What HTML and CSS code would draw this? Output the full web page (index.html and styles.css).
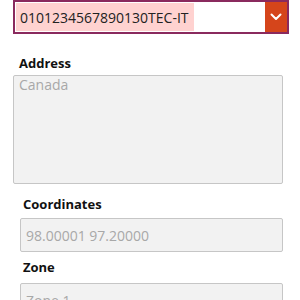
FILE: index.html
```html
<!DOCTYPE html>
<html>
<head>
<meta charset="utf-8">
<link rel="stylesheet" href="styles.css">
</head>
<body>
<div class="page">
  <div class="select">
    <span class="value">0101234567890130TEC-IT</span>
    <span class="spacer"></span>
    <span class="btn">
      <svg width="12" height="8" viewBox="0 0 12 8"><path d="M1.5 1.5 L6 6 L10.5 1.5" fill="none" stroke="#fff" stroke-width="2" stroke-linecap="round" stroke-linejoin="round"/></svg>
    </span>
  </div>
  <div class="group g-address">
    <div class="label">Address</div>
    <div class="textarea">Canada</div>
  </div>
  <div class="group g-coords">
    <div class="label">Coordinates</div>
    <div class="input">98.00001 97.20000</div>
  </div>
  <div class="group g-zone">
    <div class="label">Zone</div>
    <div class="input">Zone 1</div>
  </div>
</div>
</body>
</html>
```
FILE: styles.css
```css
html, body {
  margin: 0;
  padding: 0;
  background: #fff;
  overflow: hidden;
}
body {
  font-family: "Open Sans", "Noto Sans", sans-serif;
  font-size: 14px;
  color: #111;
}
.page {
  display: flex;
  flex-direction: column;
  width: 300px;
}
.page > * {
  flex-shrink: 0;
}
.select {
  margin-left: 13px;
  width: 276px;
  height: 34px;
  box-sizing: border-box;
  border: 2px solid #8a2a5e;
  display: flex;
  align-items: stretch;
  background: #fff;
}
.value {
  margin: 1px 0 1px 1px;
  background: #ffd2d0;
  padding: 0 5px 0 4px;
  display: flex;
  align-items: center;
  color: #222;
  font-size: 14px;
}
.spacer {
  flex: 1;
}
.btn {
  width: 22px;
  background: #d5451b;
  display: flex;
  align-items: center;
  justify-content: center;
}
.group {
  display: flex;
  flex-direction: column;
}
.group > * {
  flex-shrink: 0;
}
.label {
  font-weight: 700;
  font-size: 13px;
  line-height: 18px;
  color: #111;
}
.g-address {
  margin-top: 20px;
  padding-left: 13px;
  width: 270px;
}
.g-address .label {
  padding-left: 6px;
  margin-bottom: 3px;
}
.textarea {
  height: 109px;
  box-sizing: border-box;
  border: 1px solid #c6c6c6;
  border-radius: 2px;
  background: #f2f2f2;
  color: #a8a8a8;
  padding: 0 5px;
  line-height: 18px;
}
.g-coords {
  margin-top: 11px;
  padding-left: 20px;
  width: 263px;
}
.g-coords .label,
.g-zone .label {
  padding-left: 3px;
  margin-bottom: 5px;
}
.input {
  height: 34px;
  box-sizing: border-box;
  border: 1px solid #c6c6c6;
  border-radius: 2px;
  background: #f2f2f2;
  color: #a8a8a8;
  padding: 0 5px;
  display: flex;
  align-items: center;
}
.g-zone {
  margin-top: 6px;
  padding-left: 20px;
  width: 263px;
}
.g-zone .label {
  margin-bottom: 7px;
}
```
